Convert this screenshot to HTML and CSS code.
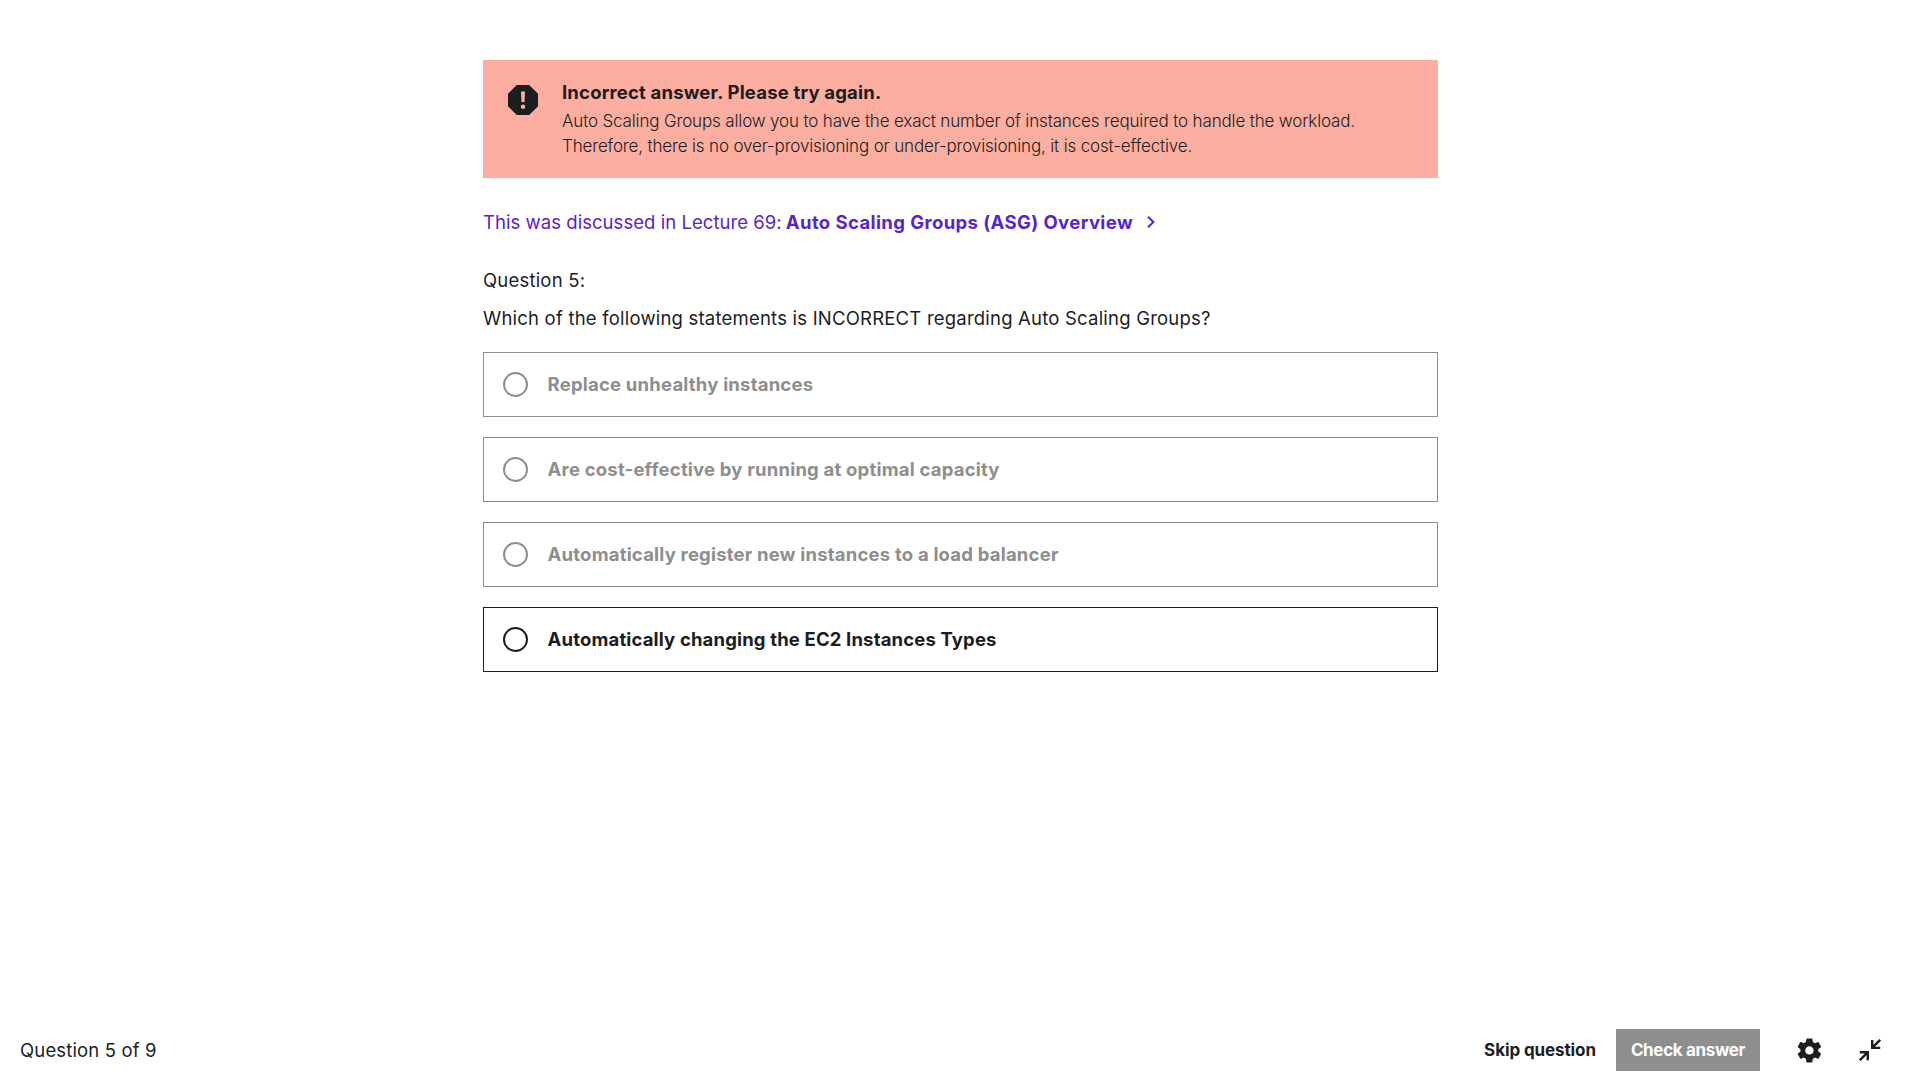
FILE: index.html
```html
<!DOCTYPE html>
<html lang="en">
<head>
<meta charset="utf-8">
<title>Quiz – Question 5 of 9</title>
<link rel="stylesheet" href="styles.css">
</head>
<body>
<main class="quiz">
  <section class="alert">
    <svg class="alert-icon" viewBox="0 0 30 30"><path fill="currentColor" fill-rule="evenodd" d="M8.8 0h12.4L30 8.8v12.4L21.2 30H8.8L0 21.2V8.8zM13 6.4h4l-.5 10.6h-3zM15 19.5a2.2 2.2 0 1 0 0 4.4 2.2 2.2 0 0 0 0-4.4z"/></svg>
    <div>
      <h2 class="alert-title">Incorrect answer. Please try again.</h2>
      <p class="alert-text">Auto Scaling Groups allow you to have the exact number of instances required to handle the workload.<br>Therefore, there is no over-provisioning or under-provisioning, it is cost-effective.</p>
    </div>
  </section>
  <a class="lecture"><span class="lecture-intro">This was discussed in Lecture 69:</span><b class="lecture-name">Auto Scaling Groups (ASG) Overview</b><svg class="chevron" viewBox="0 0 8 12"><path d="M1 .8 6.4 6 1 11.2" fill="none" stroke="currentColor" stroke-width="2"/></svg></a>
  <p class="number">Question 5:</p>
  <p class="prompt">Which of the following statements is INCORRECT regarding Auto Scaling Groups?</p>
  <ul class="answers">
    <li class="answer disabled"><span class="radio"></span><span class="answer-text">Replace unhealthy instances</span></li>
    <li class="answer disabled"><span class="radio"></span><span class="answer-text">Are cost-effective by running at optimal capacity</span></li>
    <li class="answer disabled"><span class="radio"></span><span class="answer-text">Automatically register new instances to a load balancer</span></li>
    <li class="answer"><span class="radio"></span><span class="answer-text last">Automatically changing the EC2 Instances Types</span></li>
  </ul>
</main>
<footer class="bar">
  <span class="progress">Question 5 of 9</span>
  <div class="actions">
    <button class="skip">Skip question</button>
    <button class="check">Check answer</button>
    <svg class="gear" viewBox="0 0 24 24"><path fill="currentColor" d="M19.43 12.98c.04-.32.07-.64.07-.98s-.03-.66-.07-.98l2.11-1.65c.19-.15.24-.42.12-.64l-2-3.46c-.12-.22-.39-.3-.61-.22l-2.49 1c-.52-.4-1.08-.73-1.69-.98l-.38-2.65C14.46 2.18 14.25 2 14 2h-4c-.25 0-.46.18-.49.42l-.38 2.65c-.61.25-1.17.59-1.69.98l-2.49-1c-.23-.09-.49 0-.61.22l-2 3.46c-.13.22-.07.49.12.64l2.11 1.65c-.04.32-.07.65-.07.98s.03.66.07.98l-2.11 1.65c-.19.15-.24.42-.12.64l2 3.46c.12.22.39.3.61.22l2.49-1c.52.4 1.08.73 1.69.98l.38 2.65c.03.24.24.42.49.42h4c.25 0 .46-.18.49-.42l.38-2.65c.61-.25 1.17-.59 1.69-.98l2.49 1c.23.09.49 0 .61-.22l2-3.46c.12-.22.07-.49-.12-.64l-2.11-1.65zM12 15.5c-1.93 0-3.5-1.57-3.5-3.5s1.57-3.5 3.5-3.5 3.5 1.57 3.5 3.5-1.57 3.5-3.5 3.5z"/></svg>
    <svg class="collapse" viewBox="0 0 22 22"><path fill="none" stroke="currentColor" stroke-width="2.4" d="M21.2.8 13.6 8.4M13.2.9v8h8M.8 21.2l7.6-7.6M.8 13.2h8v8"/></svg>
  </div>
</footer>
</body>
</html>
```
FILE: styles.css
```css
* { box-sizing: border-box; }
body {
  margin: 0;
  height: 1080px;
  display: flex;
  flex-direction: column;
  justify-content: space-between;
  background: #fff;
  color: #1c1d1f;
  font: 400 18.5px/26px Inter, "Liberation Sans", sans-serif;
}
h2, p, ul { margin: 0; padding: 0; }
.quiz { width: 955px; margin: 60px 0 0 483px; }
.alert {
  display: flex;
  gap: 24px;
  height: 118px;
  padding: 20px 25px;
  background: #fcaea0;
}
.alert-icon { width: 30px; height: 30px; margin-top: 5px; flex: none; }
.alert-title { font-size: 18.5px; line-height: 24px; font-weight: 700; letter-spacing: .18px; }
.alert-text {
  margin-top: 5px;
  font-size: 17px;
  font-weight: 300;
  line-height: 25px;
  letter-spacing: -.15px;
  white-space: nowrap;
}
.lecture { display: flex; align-items: center; margin-top: 31px; color: #5624d0; }
.lecture-intro { letter-spacing: .05px; margin-right: 4px; }
.lecture-name { letter-spacing: .4px; }
.chevron { width: 8px; height: 12px; margin-left: 14px; }
.number { margin-top: 32px; letter-spacing: .2px; }
.prompt { margin-top: 12px; letter-spacing: .21px; }
.answers { display: grid; gap: 20px; margin-top: 21px; list-style: none; }
.answer {
  display: flex;
  align-items: center;
  gap: 19.6px;
  height: 65px;
  padding: 0 19px;
  border: 1px solid currentColor;
  font-weight: 700;
  letter-spacing: .2px;
}
.answer-text { padding-bottom: 2px; }
.last { letter-spacing: .15px; }
.disabled { color: #8e8e8e; }
.radio { width: 25px; height: 25px; border: 2px solid currentColor; border-radius: 50%; }
.bar {
  display: flex;
  align-items: center;
  justify-content: space-between;
  height: 60px;
  padding: 0 39px 0 20px;
}
.progress { letter-spacing: .15px; }
.actions { display: flex; align-items: center; }
button {
  height: 42px;
  padding: 0;
  border: 0;
  background: none;
  color: inherit;
  font: 700 17px/42px Inter, "Liberation Sans", sans-serif;
}
.skip { width: 112px; letter-spacing: -.1px; margin-right: 20px; white-space: nowrap; }
.check { width: 144px; background: #8e8e8e; color: #fff; letter-spacing: -.35px; }
.gear { width: 28.8px; height: 28.8px; margin-left: 35.2px; }
.collapse { width: 22px; height: 22px; margin-left: 35px; }
```
